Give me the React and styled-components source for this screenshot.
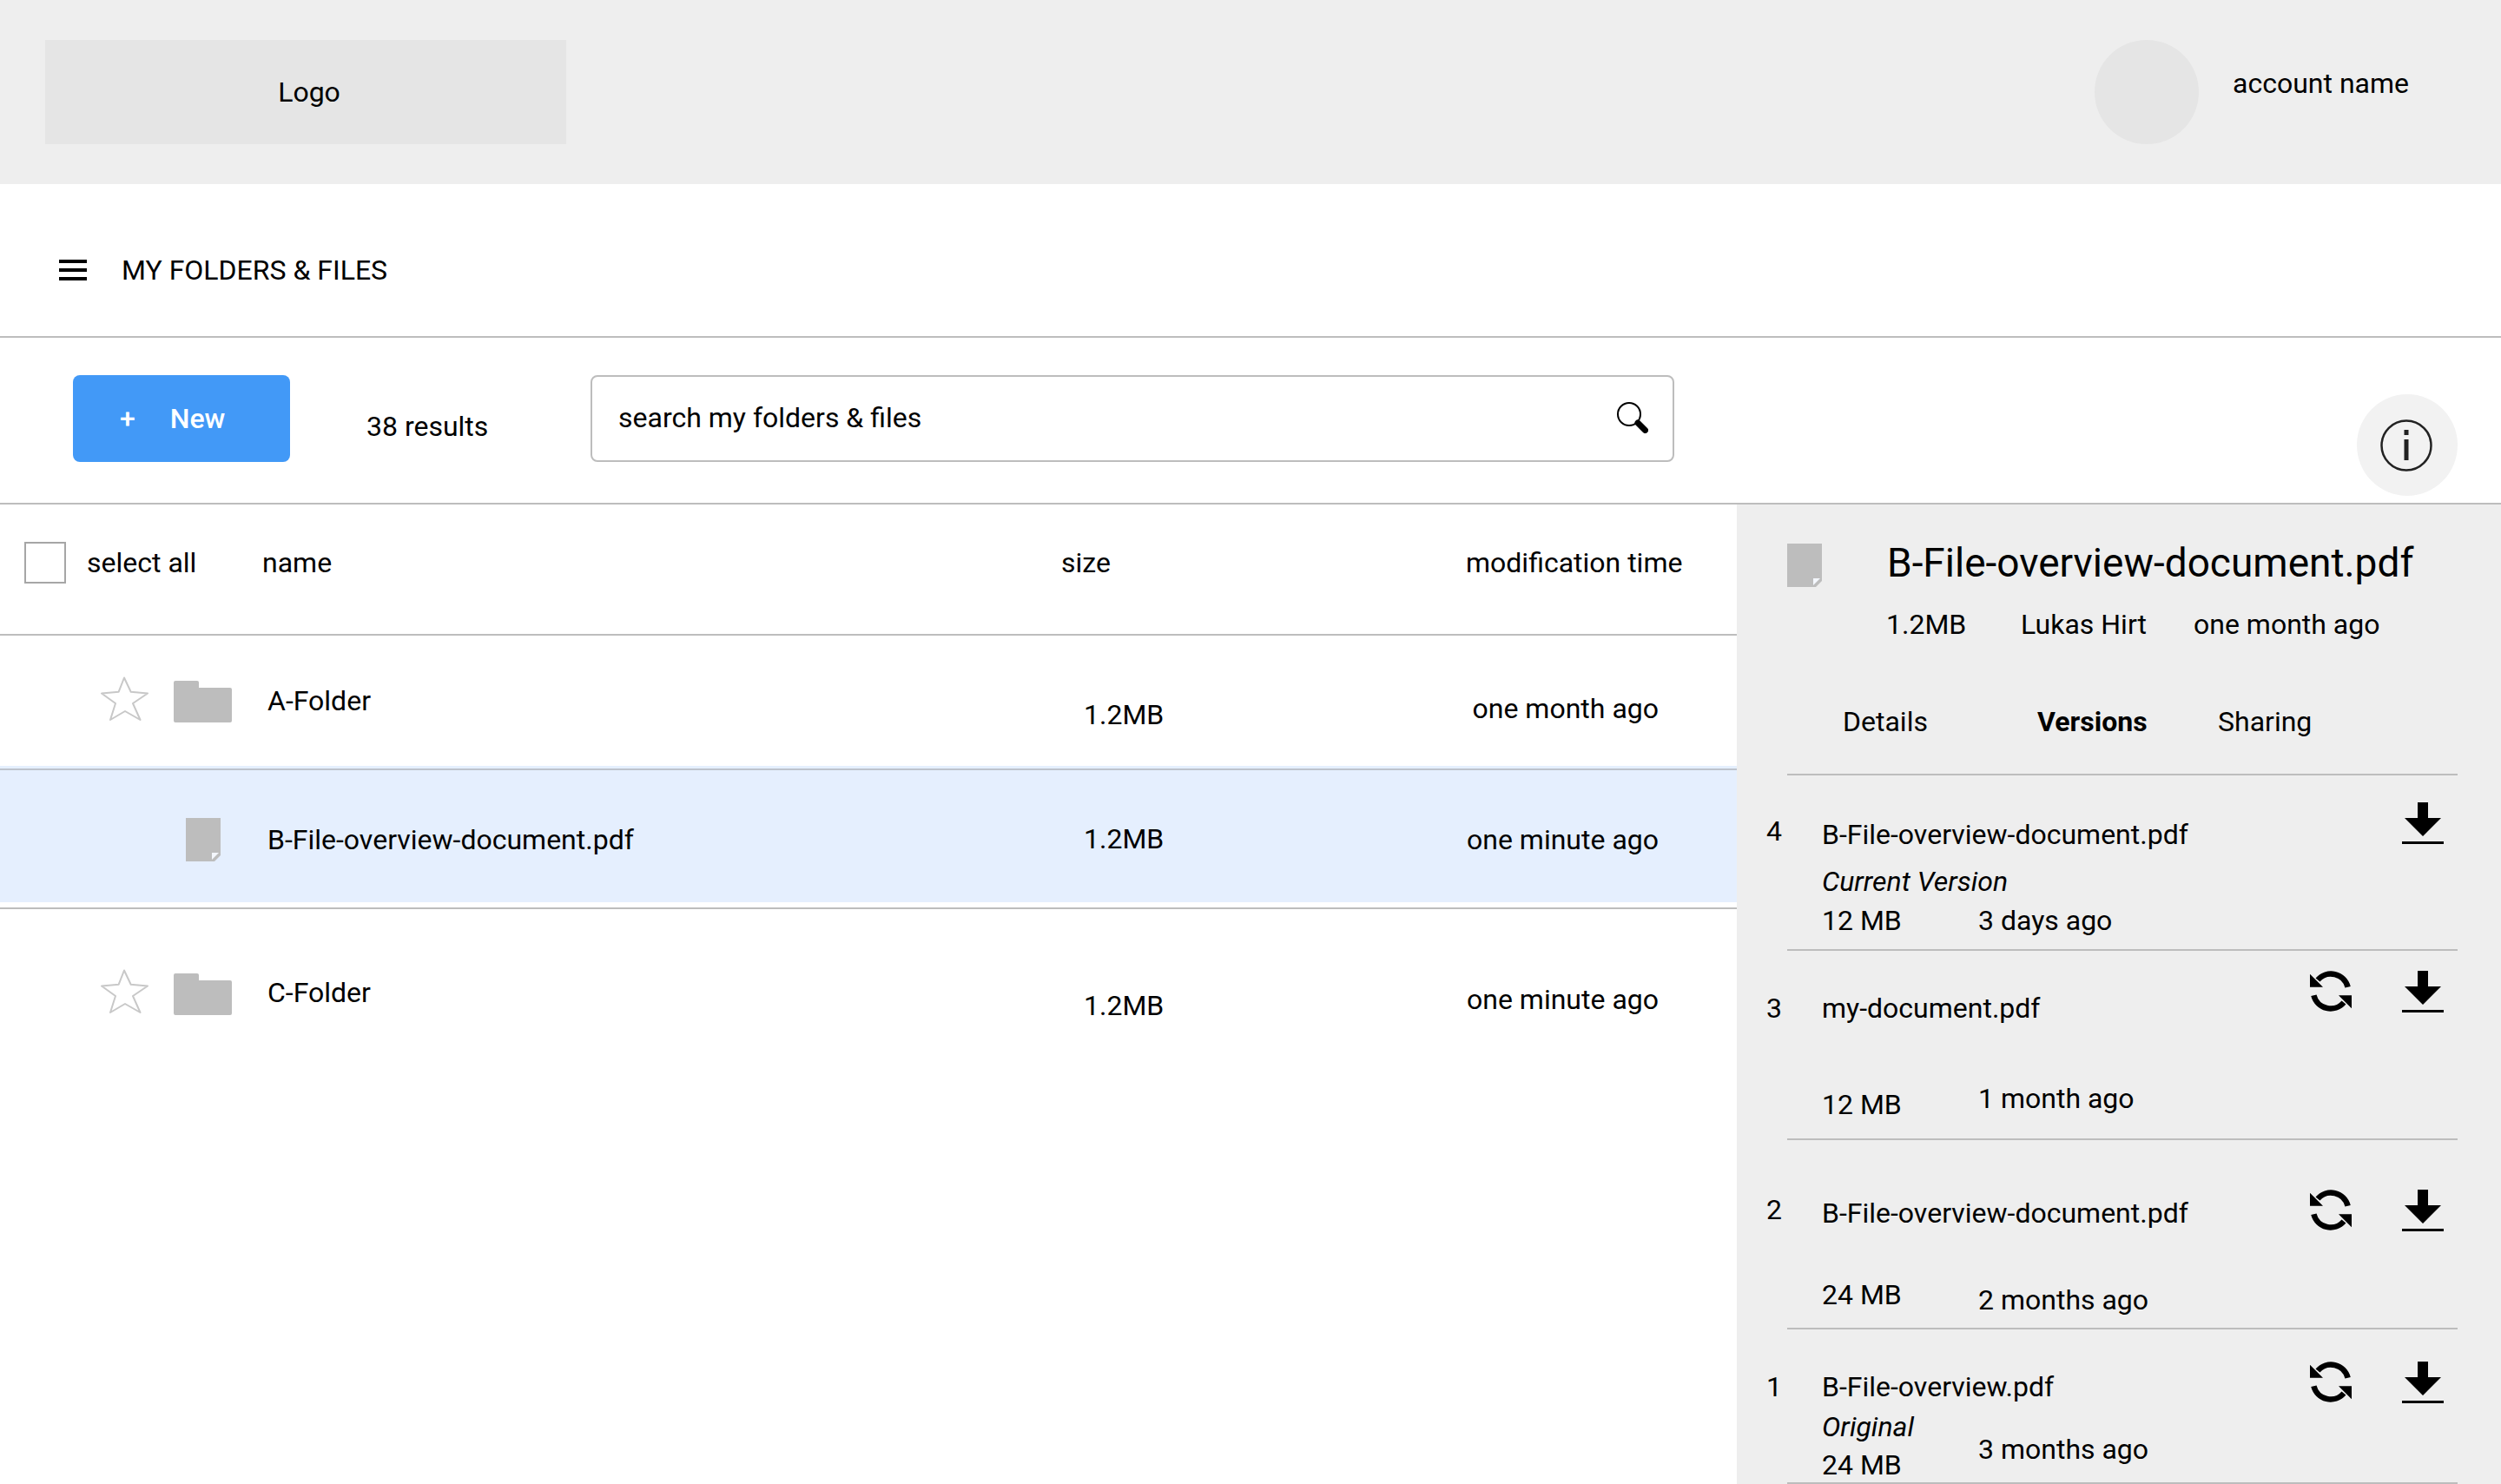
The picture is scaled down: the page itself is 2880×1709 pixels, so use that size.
import React from 'react';
import styled, { createGlobalStyle } from 'styled-components';

const GlobalStyle = createGlobalStyle`
  html, body {
    margin: 0;
    padding: 0;
    background: #fff;
  }
  body {
    font-family: Roboto, "Liberation Sans", sans-serif;
    font-size: 32px;
    line-height: 40px;
    color: #000;
  }
`;

const Page = styled.div`
  width: 2880px;
  height: 1709px;
  display: flex;
  flex-direction: column;
  overflow: hidden;
`;

const Header = styled.header`
  height: 212px;
  flex-shrink: 0;
  display: flex;
  align-items: center;
  padding: 0 106px 0 52px;
  box-sizing: border-box;
  background: #eeeeee;
`;

const Logo = styled.div`
  width: 600px;
  height: 120px;
  display: flex;
  align-items: center;
  justify-content: center;
  padding-left: 8px;
  box-sizing: border-box;
  background: #e5e5e5;
`;

const Avatar = styled.div`
  width: 120px;
  height: 120px;
  margin-left: auto;
  border-radius: 50%;
  background: #e5e5e5;
`;

const AccountName = styled.div`
  margin: 0 0 20px 39px;
`;

const NavBar = styled.nav`
  height: 177px;
  flex-shrink: 0;
  box-sizing: border-box;
  display: flex;
  align-items: center;
  gap: 40px;
  padding: 23px 0 0 68px;
  border-bottom: 2px solid #bdbdbd;
`;

const Toolbar = styled.div`
  height: 192px;
  flex-shrink: 0;
  box-sizing: border-box;
  display: flex;
  align-items: flex-start;
  padding: 43px 50px 0 84px;
  border-bottom: 2px solid #bdbdbd;
`;

const NewButton = styled.button`
  width: 250px;
  height: 100px;
  display: flex;
  align-items: center;
  gap: 40px;
  padding: 0 0 0 54px;
  box-sizing: border-box;
  border: none;
  border-radius: 8px;
  background: #4299f7;
  color: #fff;
  font: 500 32px/40px Roboto, sans-serif;
`;

const Results = styled.div`
  width: 258px;
  margin: 39px 0 0 88px;
`;

const SearchBox = styled.div`
  width: 1248px;
  height: 100px;
  box-sizing: border-box;
  display: flex;
  align-items: center;
  justify-content: space-between;
  padding: 0 28px 2px 30px;
  border: 2px solid #bdbdbd;
  border-radius: 8px;
`;

const InfoButton = styled.button`
  width: 116px;
  height: 117px;
  margin: 22px 0 0 auto;
  padding: 0 2px 0 0;
  display: flex;
  align-items: center;
  justify-content: center;
  border: none;
  border-radius: 50%;
  background: #f2f2f2;
`;

const Main = styled.div`
  flex: 1;
  display: flex;
  min-height: 0;
`;

const ListArea = styled.section`
  width: 2000px;
  flex-shrink: 0;
`;

const ListHeader = styled.div`
  height: 151px;
  box-sizing: border-box;
  display: grid;
  grid-template-columns: 72px 202px 920px 466px 1fr;
  align-items: center;
  padding: 0 0 15px 28px;
  border-bottom: 2px solid #bdbdbd;
`;

const Checkbox = styled.div`
  width: 48px;
  height: 48px;
  box-sizing: border-box;
  border: 2px solid #a6a6a6;
`;

const RowWrap = styled.div`
  height: ${p => p.$height}px;
  box-sizing: border-box;
  ${p => p.$selected && 'background: #e5effe; padding-top: 3px; margin-bottom: 6px;'}
  ${p => p.$ruled && 'border-top: 2px solid #bdbdbd;'}
`;

const RowRule = styled.div`
  height: 2px;
  background: #bdc3cc;
`;

const FileRow = styled.div`
  display: grid;
  grid-template-columns: 116px 84px 108px 940px 200px 1fr;
  align-items: start;
  padding-right: 90px;
`;

const Cell = styled.div`
  margin-top: ${p => p.$top}px;
  ${p => p.$right && 'text-align: right;'}
  ${p => p.$inset && `padding-left: ${p.$inset}px;`}
`;

const IconSvg = styled.svg`
  display: block;
  flex-shrink: 0;
`;

const Panel = styled.aside`
  flex: 1;
  min-width: 0;
  padding: 0 50px 0 58px;
  background: #eeeeee;
`;

const PanelHead = styled.div`
  display: grid;
  grid-template-columns: 115px 1fr;
  align-items: start;
`;

const PanelIcon = styled.div`
  margin-top: 45px;
`;

const PanelTitle = styled.div`
  margin-top: 40px;
  font-size: 46px;
  line-height: 54px;
`;

const PanelMeta = styled.div`
  display: flex;
  margin: 24px 0 0 -1px;
`;

const MetaItem = styled.span`
  width: ${p => p.$width}px;
`;

const Tabs = styled.div`
  display: flex;
  margin-top: 72px;
  padding: 0 0 40px 64px;
  border-bottom: 2px solid #bdbdbd;
`;

const Tab = styled.div`
  width: ${p => p.$width}px;
  ${p => p.$active && 'font-weight: 700;'}
`;

const VersionRow = styled.div`
  height: ${p => p.$height}px;
  box-sizing: border-box;
  display: grid;
  grid-template-columns: 40px 562px 106px 48px;
  align-items: start;
  border-bottom: 2px solid #bdbdbd;
`;

const VersionNo = styled.div`
  margin: ${p => p.$top}px 0 0 -24px;
`;

const VersionMain = styled.div`
  padding-top: ${p => p.$top}px;
`;

const VersionNote = styled.div`
  margin-top: ${p => p.$gap}px;
  font-style: italic;
`;

const VersionMeta = styled.div`
  display: flex;
  align-items: flex-start;
  margin-top: ${p => p.$gap}px;
`;

const VersionSize = styled.div`
  width: 180px;
`;

const VersionDate = styled.div`
  margin-top: ${p => p.$shift}px;
`;

const VersionAction = styled.div`
  margin-top: ${p => p.$top}px;
`;

const Hamburger = () => (
  <IconSvg width="32" height="24" viewBox="0 0 32 24">
    <path d="M0 0h32v4H0zM0 10h32v4H0zM0 20h32v4H0z" fill="#000" />
  </IconSvg>
);

const SearchIcon = () => (
  <IconSvg width="36" height="36" viewBox="0 0 36 36">
    <circle cx="14" cy="14" r="13" fill="none" stroke="#000" strokeWidth="2" />
    <path d="M24 24l8.500 8.500" fill="none" stroke="#000" strokeWidth="7" strokeLinecap="round" />
  </IconSvg>
);

const InfoIcon = () => (
  <IconSvg width="60" height="60" viewBox="0 0 60 60">
    <circle cx="30" cy="30" r="28.500" fill="none" stroke="#222" strokeWidth="2.500" />
    <path d="M27.500 12h5v6h-5zM27.500 23h5v24h-5z" fill="#222" />
  </IconSvg>
);

const StarIcon = () => (
  <IconSvg width="55" height="52" viewBox="0 0 55 52">
    <path
      d="M27 1.500L34.700 17.700L54 19.500L37 31L45.500 50L28 40L11 50L17 31L1 19.500L20.700 17.700Z"
      fill="none"
      stroke="#c8c8c8"
      strokeWidth="2"
      strokeLinejoin="round"
    />
  </IconSvg>
);

const FolderIcon = () => (
  <IconSvg width="67" height="48" viewBox="0 0 67 48">
    <path
      d="M2 0H27a2 2 0 0 1 2 2v6H65a2 2 0 0 1 2 2V46a2 2 0 0 1-2 2H2a2 2 0 0 1-2-2V2a2 2 0 0 1 2-2z"
      fill="#bdbdbd"
    />
  </IconSvg>
);

const DocIcon = () => (
  <IconSvg width="40" height="50" viewBox="0 0 40 50">
    <path d="M0 0H40V43L33 50H0z" fill="#bdbdbd" />
    <path d="M30 40H38L30 48z" fill="#f4f7fd" />
  </IconSvg>
);

const RestoreIcon = () => (
  <IconSvg width="48" height="48" viewBox="0 0 48 48">
    <path
      d="M43.600 18.700A20 20 0 0 0 9 10.500M4.400 28.300A20 20 0 0 0 39 36.500"
      fill="none"
      stroke="#000"
      strokeWidth="6.500"
    />
    <path d="M0 3.700V18.700H15zM48 43.300V28.300H33z" fill="#000" />
  </IconSvg>
);

const DownloadIcon = () => (
  <IconSvg width="48" height="48" viewBox="0 0 48 48">
    <path d="M18 0H30V18H45L24 39L3 18H18zM0 45H48V48H0z" fill="#000" />
  </IconSvg>
);

const versions = [
  {
    no: 4, height: 202, noTop: 44, nameTop: 48, name: 'B-File-overview-document.pdf',
    note: 'Current Version', noteGap: 14, metaGap: 5,
    size: '12 MB', date: '3 days ago', shift: 0, iconTop: 31, restore: false,
  },
  {
    no: 3, height: 218, noTop: 46, nameTop: 46, name: 'my-document.pdf',
    metaGap: 71, size: '12 MB', date: '1 month ago', shift: -7, iconTop: 23, restore: true,
  },
  {
    no: 2, height: 218, noTop: 60, nameTop: 64, name: 'B-File-overview-document.pdf',
    metaGap: 54, size: '24 MB', date: '2 months ago', shift: 6, iconTop: 57, restore: true,
  },
  {
    no: 1, height: 178, noTop: 46, nameTop: 46, name: 'B-File-overview.pdf',
    note: 'Original', noteGap: 6, metaGap: 4,
    size: '24 MB', date: '3 months ago', shift: -18, iconTop: 37, restore: true,
  },
];

const App = () => (
  <>
    <GlobalStyle />
    <Page>
      <Header>
        <Logo>Logo</Logo>
        <Avatar />
        <AccountName>account name</AccountName>
      </Header>

      <NavBar>
        <Hamburger />
        <div>MY FOLDERS &amp; FILES</div>
      </NavBar>

      <Toolbar>
        <NewButton>
          <span>+</span>
          <span>New</span>
        </NewButton>
        <Results>38 results</Results>
        <SearchBox>
          <span>search my folders &amp; files</span>
          <SearchIcon />
        </SearchBox>
        <InfoButton>
          <InfoIcon />
        </InfoButton>
      </Toolbar>

      <Main>
        <ListArea>
          <ListHeader>
            <Checkbox />
            <div>select all</div>
            <div>name</div>
            <div>size</div>
            <div>modification time</div>
          </ListHeader>

          <RowWrap $height={150}>
            <FileRow>
              <div />
              <Cell $top={47}><StarIcon /></Cell>
              <Cell $top={52}><FolderIcon /></Cell>
              <Cell $top={55}>A-Folder</Cell>
              <Cell $top={71}>1.2MB</Cell>
              <Cell $top={64} $right>one month ago</Cell>
            </FileRow>
          </RowWrap>

          <RowWrap $height={157} $selected>
            <RowRule />
            <FileRow>
              <div />
              <div />
              <Cell $top={55} $inset={14}><DocIcon /></Cell>
              <Cell $top={60}>B-File-overview-document.pdf</Cell>
              <Cell $top={59}>1.2MB</Cell>
              <Cell $top={60} $right>one minute ago</Cell>
            </FileRow>
          </RowWrap>

          <RowWrap $height={200} $ruled>
            <FileRow>
              <div />
              <Cell $top={69}><StarIcon /></Cell>
              <Cell $top={74}><FolderIcon /></Cell>
              <Cell $top={76}>C-Folder</Cell>
              <Cell $top={91}>1.2MB</Cell>
              <Cell $top={84} $right>one minute ago</Cell>
            </FileRow>
          </RowWrap>
        </ListArea>

        <Panel>
          <PanelHead>
            <PanelIcon><DocIcon /></PanelIcon>
            <div>
              <PanelTitle>B-File-overview-document.pdf</PanelTitle>
              <PanelMeta>
                <MetaItem $width={155}>1.2MB</MetaItem>
                <MetaItem $width={199}>Lukas Hirt</MetaItem>
                <MetaItem>one month ago</MetaItem>
              </PanelMeta>
            </div>
          </PanelHead>

          <Tabs>
            <Tab $width={224}>Details</Tab>
            <Tab $width={208} $active>Versions</Tab>
            <Tab>Sharing</Tab>
          </Tabs>

          {versions.map(v => (
            <VersionRow key={v.no} $height={v.height}>
              <VersionNo $top={v.noTop}>{v.no}</VersionNo>
              <VersionMain $top={v.nameTop}>
                <div>{v.name}</div>
                {v.note && <VersionNote $gap={v.noteGap}>{v.note}</VersionNote>}
                <VersionMeta $gap={v.metaGap}>
                  <VersionSize>{v.size}</VersionSize>
                  <VersionDate $shift={v.shift}>{v.date}</VersionDate>
                </VersionMeta>
              </VersionMain>
              <VersionAction $top={v.iconTop}>
                {v.restore && <RestoreIcon />}
              </VersionAction>
              <VersionAction $top={v.iconTop}>
                <DownloadIcon />
              </VersionAction>
            </VersionRow>
          ))}
        </Panel>
      </Main>
    </Page>
  </>
);

export default App;
